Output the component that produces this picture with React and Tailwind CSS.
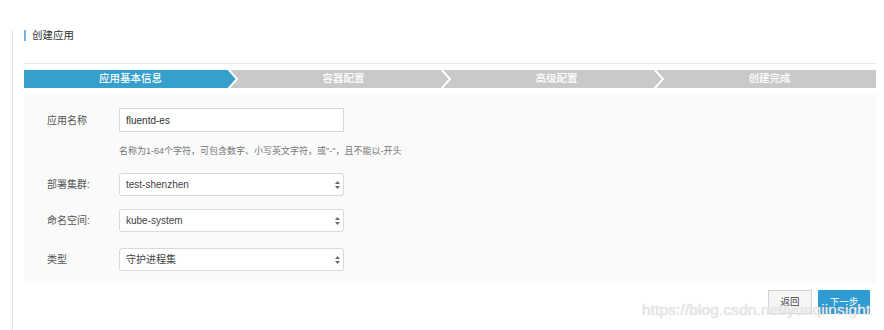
// Create application wizard: step 1 (basic info)
const font = { fontFamily: '"Liberation Sans", "Noto Sans CJK SC", sans-serif' };

const steps = ['应用基本信息', '容器配置', '高级配置', '创建完成'];

function Chevron() {
  return (
    <svg className="absolute right-[-2px] top-0 h-[18px] w-[12px]" viewBox="0 0 12 18">
      <polyline points="1,-1 10,9 1,19" fill="none" stroke="#ffffff" strokeWidth="2" />
    </svg>
  );
}

function SelectArrows() {
  return (
    <svg className="h-[8px] w-[5px]" viewBox="0 0 5 8">
      <polygon points="2.5,0 5,3 0,3" fill="#666" />
      <polygon points="0,5 5,5 2.5,8" fill="#666" />
    </svg>
  );
}

function FieldRow({ label, children, className = '' }) {
  return (
    <div className={`flex items-center ${className}`}>
      <div className="w-[72px] text-[10px] text-[#555]">{label}</div>
      {children}
    </div>
  );
}

function Select({ value }) {
  return (
    <div className="flex h-[23px] w-[225px] items-center justify-between rounded-[3px] border border-[#d9d9d9] bg-white pl-[6px] pr-[3px] text-[10px] text-[#444]">
      <span>{value}</span>
      <SelectArrows />
    </div>
  );
}

export default function App() {
  return (
    <div className="relative h-[330px] w-[884px] overflow-hidden bg-white" style={font}>
      <div className="h-full pl-[12px] pt-[13px]">
        <div className="h-full border-l border-[#e4e4e4] pl-[11px]">
          {/* Title */}
          <div className="mt-[17px] flex h-[11px] items-center">
            <div className="h-[11px] w-[2px] bg-[#6fb3e0]" />
            <span className="ml-[6px] text-[10.5px] leading-none text-[#333]">创建应用</span>
          </div>
          <div className="mt-[22px] h-px w-[852px] bg-[#e6e6e6]" />

          {/* Steps */}
          <div className="mt-[6px] flex h-[18px] w-[852px] bg-[#c9c9c9]">
            {steps.map((s, i) => (
              <div
                key={s}
                className={`relative flex flex-1 items-center justify-center text-[10.5px] font-medium text-white ${
                  i === 0 ? 'bg-[#34a0cb] [clip-path:polygon(0_0,calc(100%-9px)_0,100%_50%,calc(100%-9px)_100%,0_100%)]' : ''
                }`}
              >
                {s}
              </div>
            ))}
          </div>
          <div className="relative -mt-[18px] flex h-[18px] w-[852px]">
            {steps.map((s, i) => (
              <div key={s} className="relative flex-1">
                {i < 3 && <Chevron />}
              </div>
            ))}
          </div>

          {/* Form panel */}
          <div className="mt-[6px] w-[852px] bg-[#fafafa] pb-[12px] pl-[23px] pt-[14px]">
            <FieldRow label="应用名称">
              <div className="flex h-[24px] w-[225px] items-center border border-[#d9d9d9] bg-white pl-[6px] text-[10px] text-[#333]">
                fluentd-es
              </div>
            </FieldRow>
            <div className="ml-[72px] mt-[13px] text-[9px] leading-[12px] text-[#777]">
              名称为1-64个字符，可包含数字、小写英文字符，或"-"，且不能以-开头
            </div>
            <FieldRow label="部署集群:" className="mt-[16px]">
              <Select value="test-shenzhen" />
            </FieldRow>
            <FieldRow label="命名空间:" className="mt-[13px]">
              <Select value="kube-system" />
            </FieldRow>
            <FieldRow label="类型" className="mt-[16px]">
              <Select value="守护进程集" />
            </FieldRow>
          </div>

          {/* Buttons */}
          <div className="mt-[7px] flex w-[846px] justify-end gap-[6px]">
            <button className="h-[24px] w-[44px] border border-[#d4d4d4] bg-[#f5f5f5] text-[9.5px] text-[#444]">返回</button>
            <button className="h-[24px] w-[52px] bg-[#2f9bd3] text-[9.5px] text-white">下一步</button>
          </div>
        </div>
      </div>

      {/* Watermark */}
      <div
        className="absolute left-[642px] top-[302px] text-[15.5px] leading-none tracking-[0.1px] text-[#ececec]"
        style={{ ...font, textShadow: '0 0 1px #bdbdbd' }}
      >
        https://blog.csdn.net/yunqiinsight
      </div>
    </div>
  );
}
